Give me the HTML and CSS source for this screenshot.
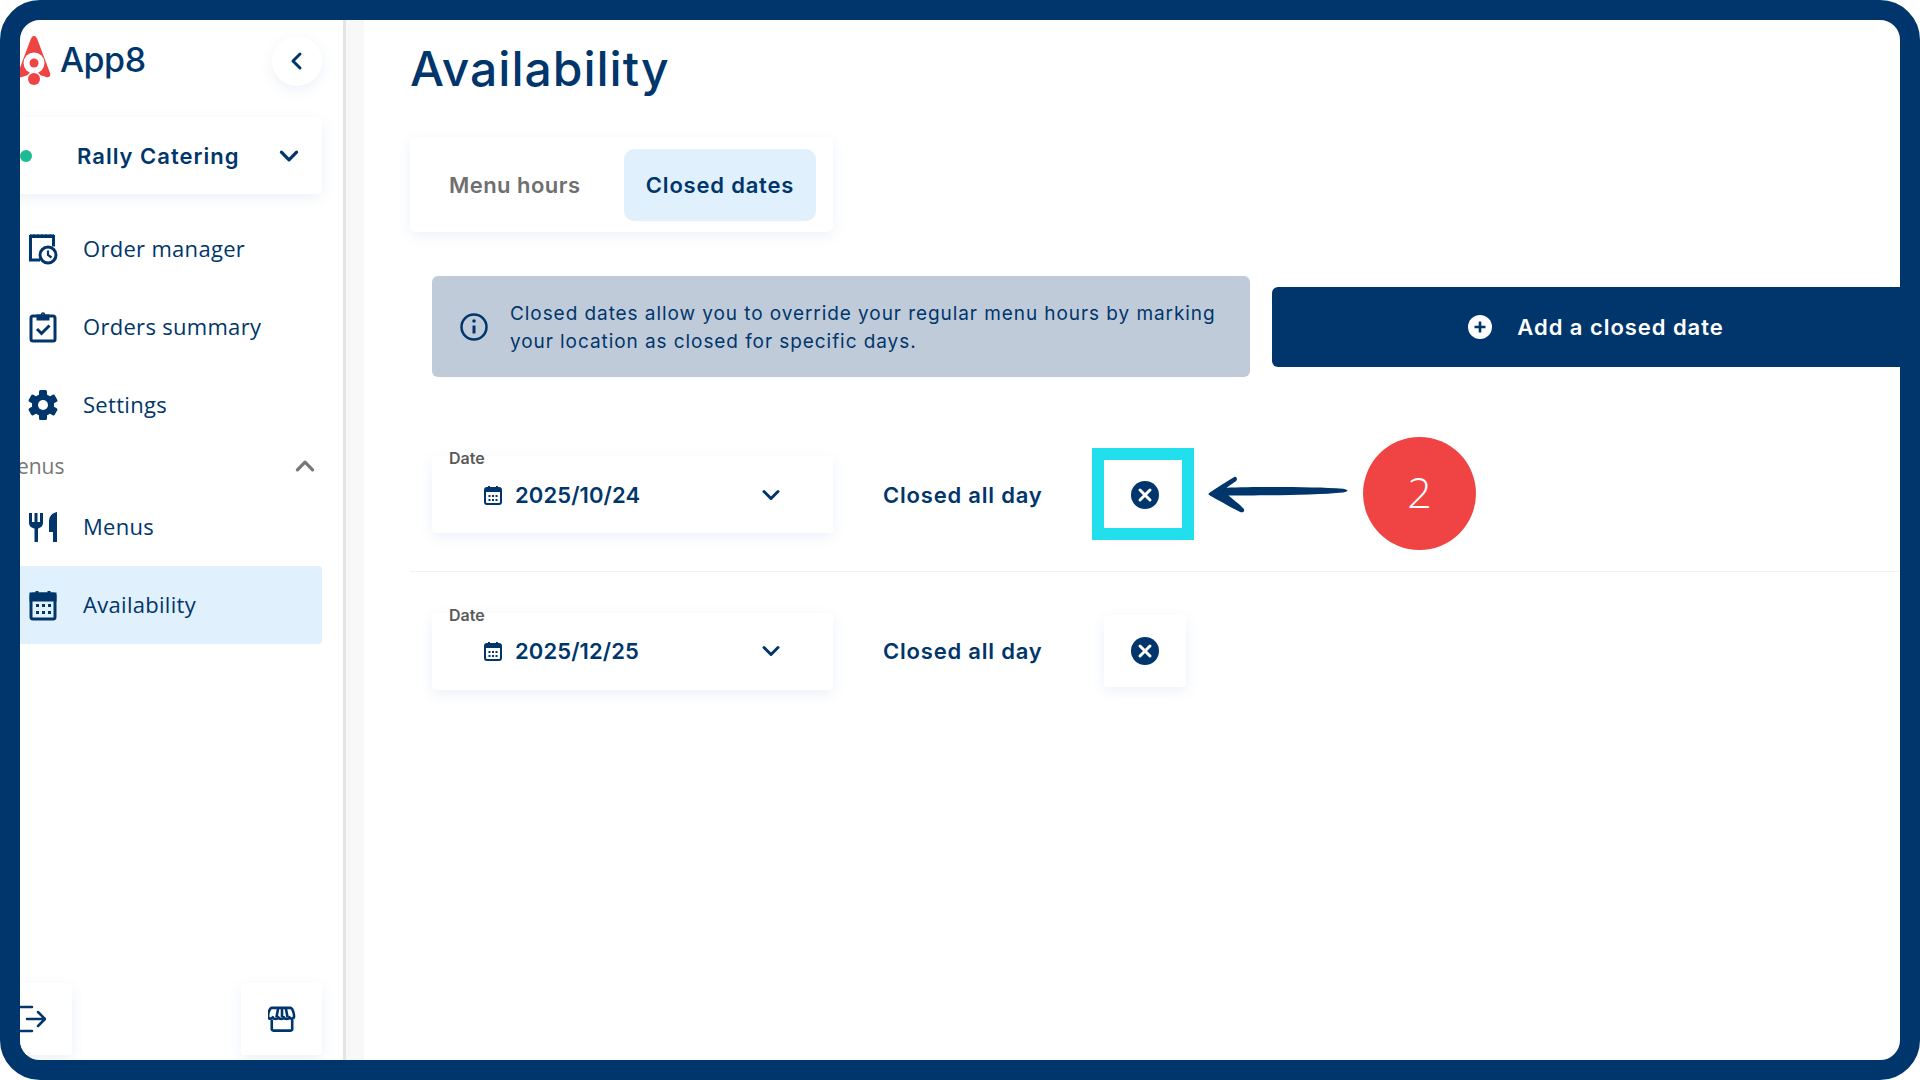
FILE: index.html
```html
<!DOCTYPE html>
<html lang="en">
<head>
  <meta charset="UTF-8" />
  <title>Availability | App8</title>
  <link rel="stylesheet" href="styles.css">
</head>
<body>
  <svg class="defs" width="0" height="0">
    <symbol id="chev" viewBox="0 0 24 24"><path d="M5 8.500l7 7 7-7" fill="none" stroke="currentColor" stroke-width="3" stroke-linecap="round" stroke-linejoin="round"/></symbol>
    <symbol id="closeCircle" viewBox="0 0 28 28"><circle cx="14" cy="14" r="14" fill="#00366b"/><path d="M9 9l10 10M19 9L9 19" stroke="#fff" stroke-width="3" stroke-linecap="round"/></symbol>
    <symbol id="calSmall" viewBox="0 0 18 20"><rect x="1" y="3" width="16" height="16" rx="2" fill="none" stroke="#00366b" stroke-width="2"/><rect x="1" y="3" width="16" height="4" fill="#00366b"/><path d="M5 1v3M13 1v3" stroke="#00366b" stroke-width="2"/><path d="M4.500 10h2v2h-2zM8 10h2v2H8zM11.500 10h2v2h-2zM4.500 14h2v2h-2zM8 14h2v2H8zM11.500 14h2v2h-2z" fill="#00366b"/></symbol>
  </svg>

  <div class="frame">
    <aside class="sidebar">
      <div class="brand">
        <svg class="rocket" width="36" height="52" viewBox="0 0 36 52">
          <path d="M18 1C20 1 21 3 22 6L34 38C35 41 33 43 30 42L24 40H12L6 42C3 43 1 41 2 38L14 6C15 3 16 1 18 1Z" fill="#ef4444"/>
          <circle cx="18" cy="28" r="10.500" fill="#fff"/>
          <circle cx="18" cy="28" r="4.500" fill="#ef4444"/>
          <circle cx="18" cy="44" r="7.500" fill="#fff"/>
          <circle cx="18" cy="44" r="6" fill="#ef4444"/>
        </svg>
        <span class="brand-name">App8</span>
        <button class="back-btn">
          <svg width="24" height="24" viewBox="0 0 24 24"><path d="M15 5l-7 7 7 7" fill="none" stroke="#00366b" stroke-width="3" stroke-linecap="round" stroke-linejoin="round"/></svg>
        </button>
      </div>

      <div class="location">
        <span class="dot"></span>
        <span class="location-name">Rally Catering</span>
        <svg class="chev" width="26" height="26"><use href="#chev"/></svg>
      </div>

      <nav class="nav">
        <a class="nav-item">
          <svg width="32" height="32" viewBox="0 0 32 32" fill="none" stroke="#00366b" stroke-width="3">
            <path d="M13 27H3.500V3.500h23v10" />
            <path d="M3 2h1v2h2V2h2v2h2V2h2v2h2V2h2v2h2V2h2v2h2V2h2v2h2V2h1" stroke-width="1.500"/>
            <circle cx="21" cy="22" r="8"/>
            <path d="M21 17.500V22l3.500 2.500" stroke-width="2.200"/>
          </svg>
          <span>Order manager</span>
        </a>
        <a class="nav-item">
          <svg width="32" height="32" viewBox="0 0 32 32" fill="none" stroke="#00366b" stroke-width="3">
            <rect x="4" y="5" width="24" height="25" rx="2"/>
            <path d="M11 5h10v3H11z" fill="#00366b"/>
            <circle cx="16" cy="3.500" r="1.500" stroke-width="1.500"/>
            <path d="M10 18l4.500 4.500 8-8" stroke-width="3"/>
          </svg>
          <span>Orders summary</span>
        </a>
        <a class="nav-item">
          <svg width="32" height="32" viewBox="0 0 32 32">
            <g fill="#00366b">
              <rect x="12" y="1" width="8" height="30" rx="1.500"/>
              <rect x="12" y="1" width="8" height="30" rx="1.500" transform="rotate(60 16 16)"/>
              <rect x="12" y="1" width="8" height="30" rx="1.500" transform="rotate(120 16 16)"/>
              <circle cx="16" cy="16" r="11"/>
            </g>
            <circle cx="16" cy="16" r="5" fill="#fff"/>
          </svg>
          <span>Settings</span>
        </a>
      </nav>

      <div class="nav-heading">
        <span>Menus</span>
        <svg width="26" height="26" class="flip"><use href="#chev"/></svg>
      </div>

      <nav class="nav">
        <a class="nav-item">
          <svg width="32" height="32" viewBox="0 0 32 32" fill="#00366b">
            <path d="M2 2h3v9h2.500V2h3v9h2.500V2h3v10c0 3-2.500 5-5 5.500V31H7.500V17.500C4.500 17 2 15 2 12z"/>
            <path d="M30 1v30h-4V21h-4V11C22 5 25 2 30 1z"/>
          </svg>
          <span>Menus</span>
        </a>
        <a class="nav-item active">
          <svg width="32" height="32" viewBox="0 0 32 32" fill="none" stroke="#00366b" stroke-width="3">
            <rect x="4" y="5" width="24" height="25" rx="2"/>
            <rect x="4" y="5" width="24" height="6" fill="#00366b"/>
            <path d="M10 2v5M22 2v5"/>
            <path d="M9 15h3v3H9zM15 15h3v3h-3zM21 15h3v3h-3zM9 22h3v3H9zM15 22h3v3h-3zM21 22h3v3h-3z" fill="#00366b" stroke="none"/>
          </svg>
          <span>Availability</span>
        </a>
      </nav>

      <div class="side-bottom">
        <button class="square-btn logout">
          <svg width="36" height="28" viewBox="0 0 36 28" fill="none" stroke="#00366b" stroke-width="2.500" stroke-linecap="round" stroke-linejoin="round">
            <path d="M22 2H4v24h18"/>
            <path d="M17 14h18M28 7l7 7-7 7"/>
          </svg>
        </button>
        <button class="square-btn">
          <svg width="28" height="26" viewBox="0 0 30 28" fill="none" stroke="#00366b" stroke-width="2.800" stroke-linejoin="round">
            <path d="M6 2h18c2 0 4 5 4 9 0 3-4 3.500-5 1-1 2.500-5 2.500-6 0-1 2.500-5 2.500-6 0-1 2.500-5 2.500-6 0-1 2.500-5 2-5-1 0-4 2-9 4-9z"/>
            <path d="M11 2l-2 10M19 2l2 10M15 2v10"/>
            <path d="M4 15v10a1.500 1.500 0 0 0 1.500 1.500h19A1.500 1.500 0 0 0 26 25V15"/>
          </svg>
        </button>
      </div>
    </aside>

    <main class="main">
      <h1>Availability</h1>

      <div class="tabs">
        <div class="tab">Menu hours</div>
        <div class="tab selected">Closed dates</div>
      </div>

      <div class="info-row">
        <div class="info">
          <svg width="30" height="30" viewBox="0 0 30 30" fill="none" stroke="#00366b" stroke-width="2.500">
            <circle cx="15" cy="15" r="12.500"/>
            <path d="M15 13.500v8" stroke-width="3"/>
            <circle cx="15" cy="9" r="1.800" fill="#00366b" stroke="none"/>
          </svg>
          <p>Closed dates allow you to override your regular menu hours by marking<br>your location as closed for specific days.</p>
        </div>
        <button class="add-btn">
          <svg width="24" height="24" viewBox="0 0 24 24"><circle cx="12" cy="12" r="12" fill="#fff"/><path d="M12 6.500v11M6.500 12h11" stroke="#00366b" stroke-width="2.600"/></svg>
          <span>Add a closed date</span>
        </button>
      </div>

      <div class="date-row">
        <div class="date-card">
          <span class="date-label">Date</span>
          <svg width="18" height="20"><use href="#calSmall"/></svg>
          <span class="date-value">2025/10/24</span>
          <svg class="chev" width="24" height="24"><use href="#chev"/></svg>
        </div>
        <span class="closed-text">Closed all day</span>
        <button class="remove-btn"><svg width="28" height="28"><use href="#closeCircle"/></svg></button>
      </div>

      <div class="date-row">
        <div class="date-card">
          <span class="date-label">Date</span>
          <svg width="18" height="20"><use href="#calSmall"/></svg>
          <span class="date-value">2025/12/25</span>
          <svg class="chev" width="24" height="24"><use href="#chev"/></svg>
        </div>
        <span class="closed-text">Closed all day</span>
        <button class="remove-btn"><svg width="28" height="28"><use href="#closeCircle"/></svg></button>
      </div>
    </main>

    <!-- tutorial annotation on top of the page -->
    <div class="highlight"></div>
    <svg class="arrow" width="142" height="41" viewBox="0 0 146 42">
      <path d="M3 19C10 14 20 8 28 3C30 2 32 5 30 7L20 14C50 13 110 13 140 15C146 16 146 18 140 19C110 22 50 22 22 22C28 27 36 33 38 36C39 39 36 40 34 39C24 34 12 27 3 22C1 21 1 20 3 19Z" fill="#00366b"/>
    </svg>
    <div class="step"><span>2</span></div>
  </div>
</body>
</html>
```

FILE: styles.css
```css
:root {
  --navy: #00366b;
  --pale: #e1f0fd;
  --card-shadow: 0 4px 14px rgba(30,100,180,0.09);
}
* {
  box-sizing: border-box;
}
body {
  margin: 0;
  background: #fff;
  color: var(--navy);
  font-family: 'Inter', 'Liberation Sans', sans-serif;
}
button {
  border: none;
  background: #fff;
  padding: 0;
  font-family: inherit;
  color: inherit;
  display: flex;
  align-items: center;
  justify-content: center;
}
.defs {
  position: absolute;
}
.frame {
  position: relative;
  width: 1920px;
  height: 1080px;
  border: 20px solid var(--navy);
  border-radius: 40px;
  overflow: hidden;
  display: flex;
  background: #fff;
}

/* sidebar */
.sidebar {
  width: 326px;
  flex-shrink: 0;
  padding: 16px 21px 5px 0;
  border-right: 3px solid #e4e4e4;
  display: flex;
  flex-direction: column;
  overflow: hidden;
}
.brand {
  display: flex;
  align-items: center;
  height: 50px;
  margin-left: -4px;
}
.rocket {
  flex-shrink: 0;
}
.brand-name {
  font-size: 34px;
  font-weight: 500;
  letter-spacing: -0.5px;
  margin: 0 0 4px 8px;
}
.back-btn {
  width: 50px;
  height: 50px;
  border-radius: 50%;
  margin-left: auto;
  box-shadow: var(--card-shadow);
}
.location {
  margin: 31px 0 16px -20px;
  height: 77px;
  display: flex;
  align-items: center;
  border-radius: 4px;
  box-shadow: var(--card-shadow);
  padding: 0 20px;
}
.dot {
  width: 12px;
  height: 12px;
  border-radius: 50%;
  background: #1dbb94;
}
.location-name {
  font-size: 22px;
  font-weight: 600;
  letter-spacing: 1px;
  margin-left: 45px;
}
.chev {
  margin-left: auto;
  flex-shrink: 0;
}
.nav {
  display: flex;
  flex-direction: column;
}
.nav-item {
  height: 78px;
  display: flex;
  align-items: center;
  gap: 24px;
  font-family: 'Open Sans', sans-serif;
  font-size: 22px;
  letter-spacing: 0.3px;
  margin-left: -20px;
  padding-left: 27px;
  border-radius: 4px;
}
.nav-item span {
  margin-bottom: 2px;
}
.nav-item.active {
  background: var(--pale);
}
.nav-heading {
  height: 44px;
  display: flex;
  align-items: center;
  justify-content: space-between;
  margin-left: -20px;
  padding-right: 4px;
  color: #777;
  font-family: 'Open Sans', sans-serif;
  font-size: 21px;
}
.nav-heading span {
  margin-left: -2px;
}
.flip {
  transform: rotate(180deg);
}
.side-bottom {
  margin: auto 0 0 -20px;
  display: flex;
  justify-content: space-between;
}
.square-btn {
  width: 81px;
  height: 72px;
  border-radius: 4px;
  box-shadow: var(--card-shadow);
}
.square-btn.logout {
  width: 72px;
  justify-content: flex-start;
  padding-left: 10px;
}

/* main */
.main {
  flex: 1;
  min-width: 0;
  margin-left: 18px;
  padding: 19px 0 0 46px;
  box-shadow: -18px 0 0 #f8f8f8;
}
h1 {
  margin: 0;
  font-size: 48px;
  line-height: 60px;
  font-weight: 500;
  letter-spacing: 1px;
}
.tabs {
  margin-top: 38px;
  width: 423px;
  height: 95px;
  padding: 12px 17px 11px 0;
  border-radius: 6px;
  box-shadow: var(--card-shadow);
  display: flex;
  align-items: stretch;
  justify-content: space-between;
}
.tab {
  font-size: 22px;
  font-weight: 600;
  letter-spacing: 0.45px;
  color: #6f6f6f;
  display: flex;
  align-items: center;
  padding-left: 39px;
}
.tab.selected {
  width: 192px;
  padding: 0;
  justify-content: center;
  background: var(--pale);
  border-radius: 10px;
  color: var(--navy);
  letter-spacing: 0.8px;
}
.info-row {
  margin: 44px 0 0 22px;
  display: flex;
  align-items: center;
  gap: 22px;
}
.info {
  width: 818px;
  height: 101px;
  flex-shrink: 0;
  background: #c0cbd9;
  border-radius: 6px;
  display: flex;
  align-items: center;
  gap: 21px;
  padding-left: 27px;
}
.info p {
  margin: 2px 0 0;
  font-size: 19px;
  line-height: 28px;
  letter-spacing: 0.93px;
}
.add-btn {
  width: 648px;
  height: 80px;
  flex-shrink: 0;
  background: var(--navy);
  color: #fff;
  border-radius: 6px;
  gap: 25px;
  font-size: 22px;
  font-weight: 600;
  letter-spacing: 0.95px;
}
.date-row {
  height: 156px;
  display: flex;
  align-items: center;
  padding: 2px 0 0 22px;
  border-bottom: 1px solid #f2f2f2;
}
.info-row + .date-row {
  margin-top: 39px;
}
.date-row:last-child {
  border-bottom: none;
}
.date-card {
  position: relative;
  width: 401px;
  height: 77px;
  flex-shrink: 0;
  border-radius: 4px;
  box-shadow: var(--card-shadow);
  display: flex;
  align-items: center;
  padding: 0 50px 0 52px;
}
.date-label {
  position: absolute;
  left: 17px;
  top: -8px;
  font-size: 16px;
  font-weight: 600;
  color: #5a5a5a;
}
.date-value {
  font-size: 22px;
  font-weight: 600;
  margin-left: 13px;
  letter-spacing: 0.1px;
}
.closed-text {
  width: 271px;
  padding-left: 50px;
  flex-shrink: 0;
  font-size: 22px;
  font-weight: 600;
  letter-spacing: 0.8px;
}
.remove-btn {
  width: 82px;
  height: 72px;
  border-radius: 4px;
  box-shadow: var(--card-shadow);
}

/* annotation */
.highlight {
  position: absolute;
  left: 1072px;
  top: 428px;
  width: 102px;
  height: 92px;
  border: 12px solid #22dfee;
}
.arrow {
  position: absolute;
  left: 1187px;
  top: 454px;
}
.step {
  position: absolute;
  left: 1343px;
  top: 417px;
  width: 113px;
  height: 113px;
  border-radius: 50%;
  background: #f04343;
  color: #fff;
  font-family: 'Open Sans', sans-serif;
  font-size: 43px;
  font-weight: 300;
  display: flex;
  align-items: center;
  justify-content: center;
}
.step span {
  margin-bottom: 4px;
}
```
